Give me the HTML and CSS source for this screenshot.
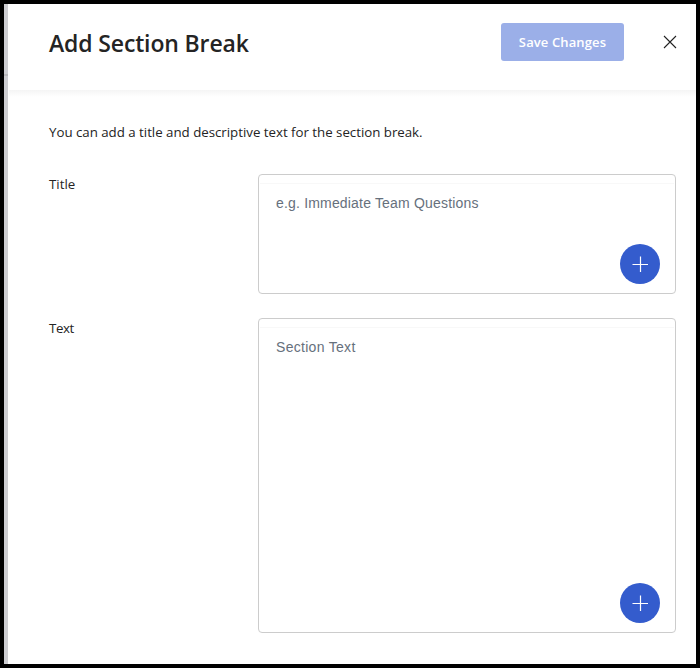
FILE: index.html
```
<!DOCTYPE html>
<html lang="en"><head><meta charset="utf-8"><title>Add Section Break</title><link rel="stylesheet" href="styles.css"></head>
<body>
<div class="frame"><main class="panel">
<header class="header"><h1>Add Section Break</h1><button class="save">Save Changes</button><button class="close" aria-label="Close"><svg width="14" height="14" viewBox="0 0 14 14"><path d="M1 1L13 13M13 1L1 13"/></svg></button></header>
<section class="content">
<p class="intro">You can add a title and descriptive text for the section break.</p>
<div class="row"><label class="label">Title</label><div class="editor small"><div class="toolbar"></div><p class="placeholder">e.g. Immediate Team Questions</p><button class="add" aria-label="Add"><svg width="18" height="18" viewBox="0 0 18 18"><path d="M9.5 1.5V17M1.5 9.5H17"/></svg></button></div></div>
<div class="row"><label class="label text">Text</label><div class="editor large"><div class="toolbar"></div><p class="placeholder">Section Text</p><button class="add" aria-label="Add"><svg width="18" height="18" viewBox="0 0 18 18"><path d="M9.5 1.5V17M1.5 9.5H17"/></svg></button></div></div>
</section></main></div>
</body></html>
```
FILE: styles.css
```
* { box-sizing: border-box; }
body { margin: 0; color: #242424; font: 14px/20px "Open Sans", sans-serif; }
h1, p { margin: 0; }
button { border: 0; padding: 0; background: none; font: inherit; }
svg { display: block; fill: none; }
.frame { height: 668px; border: 4px solid #000; padding-left: 4px; background: linear-gradient(#b8b8bc, #b8b8bc) 0 70px / 4px 2px no-repeat #cdcdd1; }
.panel { height: 660px; background: #fff; }
.header { height: 86px; display: flex; align-items: flex-start; padding: 19px 19px 0 41px; }
h1 { flex: 1; font-size: 23px; line-height: 40px; font-weight: 600; letter-spacing: -.14px; white-space: nowrap; }
.save { width: 123px; height: 38px; border-radius: 3px; background: #9bafe8; color: #fff; font-size: 13px; font-weight: 600; letter-spacing: .12px; }
.close { margin: 12px 0 0 39px; }
.close svg { stroke: #222; stroke-width: 1.1; }
.content { margin-left: 1px; padding: 32px 20px 0 40px; background: linear-gradient(#f5f5f5, #fff) 0 0 / 100% 7px no-repeat; }
.intro { font-size: 13.3px; letter-spacing: -.02px; margin-bottom: 32px; }
.row { display: grid; grid-template-columns: 209px 1fr; margin-bottom: 24px; }
.label { font-size: 13.3px; }
.text { letter-spacing: -.4px; }
.editor { display: flex; flex-direction: column; border: 1px solid #ccc; border-radius: 4px; padding: 0 15px 9px 17px; }
.small { height: 120px; }
.large { height: 315px; }
.toolbar { height: 9px; margin: 0 -14px 0 -16px; border-bottom: 1px solid #f8f8f8; }
.placeholder { margin-top: 9px; font-family: "Liberation Sans", sans-serif; letter-spacing: .18px; color: #66707c; }
.large .placeholder { letter-spacing: .3px; }
.add { width: 40px; height: 40px; border-radius: 50%; background: #345ccd; display: grid; place-items: center; margin: auto 0 0 auto; }
.add svg { stroke: #fff; stroke-width: 1.2; }
```
